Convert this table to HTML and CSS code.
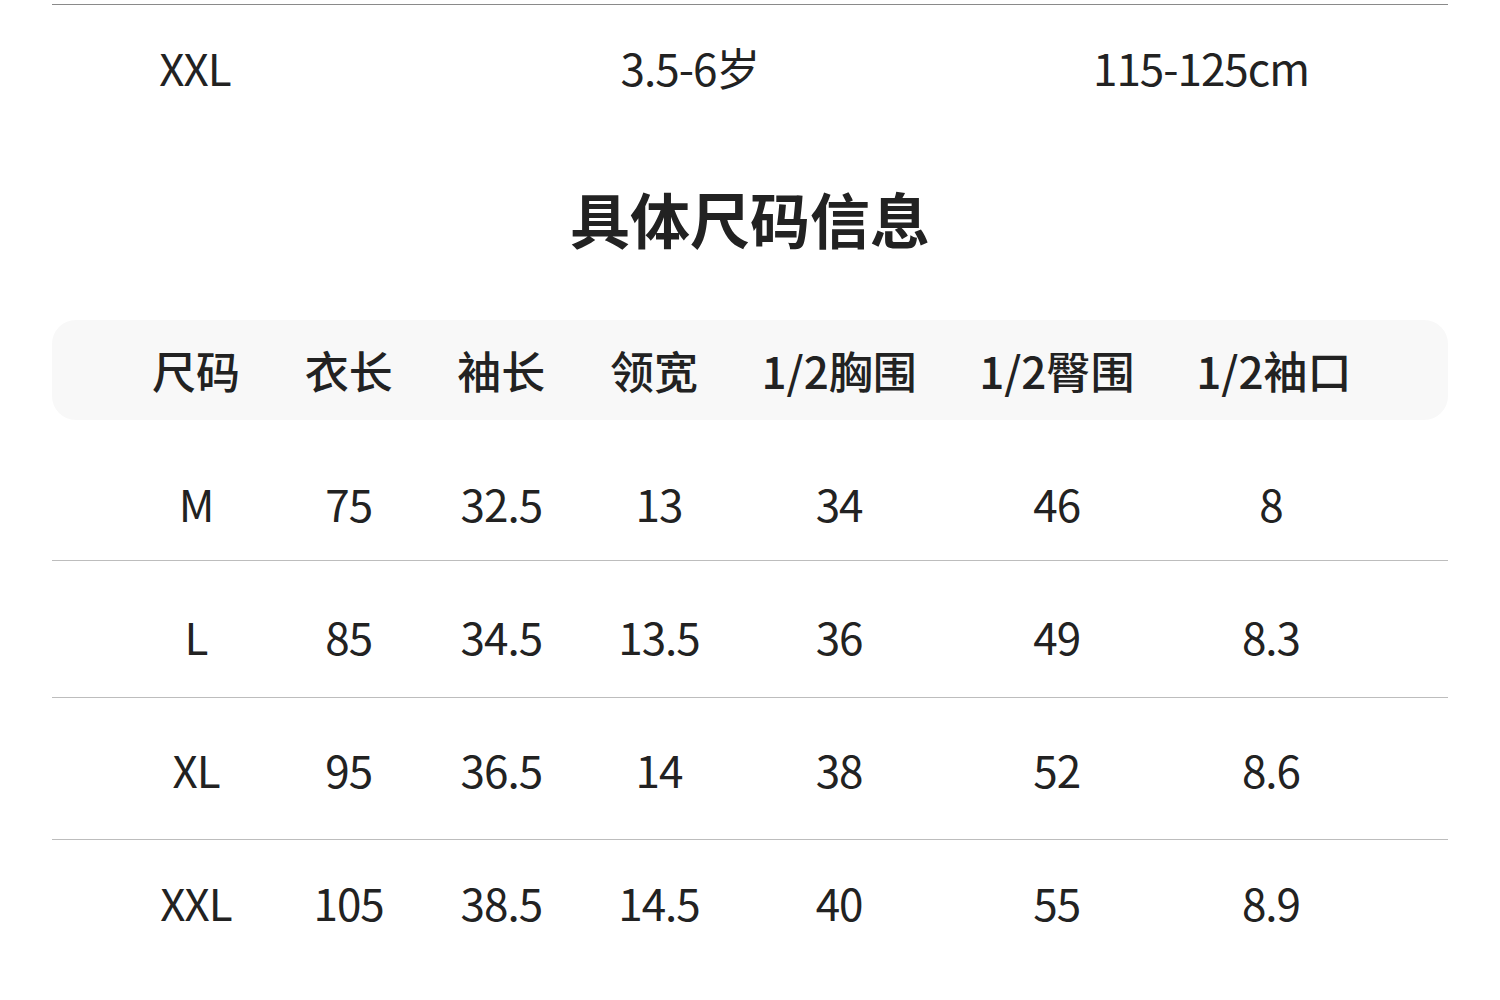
FILE: index.html
```html
<!DOCTYPE html>
<html lang="zh-CN">
<head>
<meta charset="utf-8">
<title>具体尺码信息</title>
<link rel="stylesheet" href="styles.css">
</head>
<body>
<div class="page">
  <div class="prev-row">
    <div class="cell">XXL</div>
    <div class="cell">3.5-6岁</div>
    <div class="cell">115-125cm</div>
  </div>

  <h2 class="title">具体尺码信息</h2>

  <div class="table">
    <div class="row head">
      <div class="cell">尺码</div>
      <div class="cell">衣长</div>
      <div class="cell">袖长</div>
      <div class="cell">领宽</div>
      <div class="cell">1/2胸围</div>
      <div class="cell">1/2臀围</div>
      <div class="cell">1/2袖口</div>
    </div>
    <div class="row body r1">
      <div class="cell">M</div><div class="cell">75</div><div class="cell">32.5</div><div class="cell">13</div><div class="cell">34</div><div class="cell">46</div><div class="cell">8</div>
    </div>
    <div class="row body r2">
      <div class="cell">L</div><div class="cell">85</div><div class="cell">34.5</div><div class="cell">13.5</div><div class="cell">36</div><div class="cell">49</div><div class="cell">8.3</div>
    </div>
    <div class="row body r3">
      <div class="cell">XL</div><div class="cell">95</div><div class="cell">36.5</div><div class="cell">14</div><div class="cell">38</div><div class="cell">52</div><div class="cell">8.6</div>
    </div>
    <div class="row body r4">
      <div class="cell">XXL</div><div class="cell">105</div><div class="cell">38.5</div><div class="cell">14.5</div><div class="cell">40</div><div class="cell">55</div><div class="cell">8.9</div>
    </div>
  </div>
</div>
</body>
</html>
```

FILE: styles.css
```css
* { box-sizing: border-box; }
html, body {
  margin: 0;
  padding: 0;
  background: #ffffff;
}
body {
  font-family: "Noto Sans CJK SC", "Noto Sans", sans-serif;
  color: #222222;
  overflow: hidden;
}
.page {
  width: 1396px;
  margin: 0 auto;
  padding-top: 4px;
}
.prev-row {
  border-top: 1px solid #8a8a8a;
  display: grid;
  grid-template-columns: 286px 704px 318px;
  padding-top: 32px;
  font-size: 44px;
  line-height: 60px;
  letter-spacing: -1px;
}
.prev-row .cell { text-align: center; }

.title {
  margin: 0;
  padding-top: 81px;
  text-align: center;
  font-size: 60px;
  line-height: 80px;
  font-weight: 700;
  letter-spacing: 0;
}

.table {
  margin-top: 62px;
}
.row {
  display: grid;
  grid-template-columns: 88px 88px 88px 88px 153px 153px 152px;
  justify-content: space-between;
  padding-left: 100px;
  padding-right: 98px;
  font-size: 44px;
  line-height: 60px;
}
.row .cell {
  text-align: center;
  white-space: nowrap;
  display: flex;
  justify-content: center;
}
.head {
  background: #f8f8f8;
  border-radius: 24px;
  height: 100px;
  align-items: center;
  font-weight: 500;
}
.body { letter-spacing: -1px; }
.body .cell:nth-child(4) { padding-left: 10px; }
.body .cell:nth-child(7) { padding-right: 6px; }
.r1 { padding-top: 53px; padding-bottom: 27px; border-bottom: 1px solid #bdbdbd; }
.r2 { padding-top: 45px; padding-bottom: 31px; border-bottom: 1px solid #bdbdbd; }
.r3 { padding-top: 41px; padding-bottom: 40px; border-bottom: 1px solid #bdbdbd; }
.r4 { padding-top: 32px; }
```
